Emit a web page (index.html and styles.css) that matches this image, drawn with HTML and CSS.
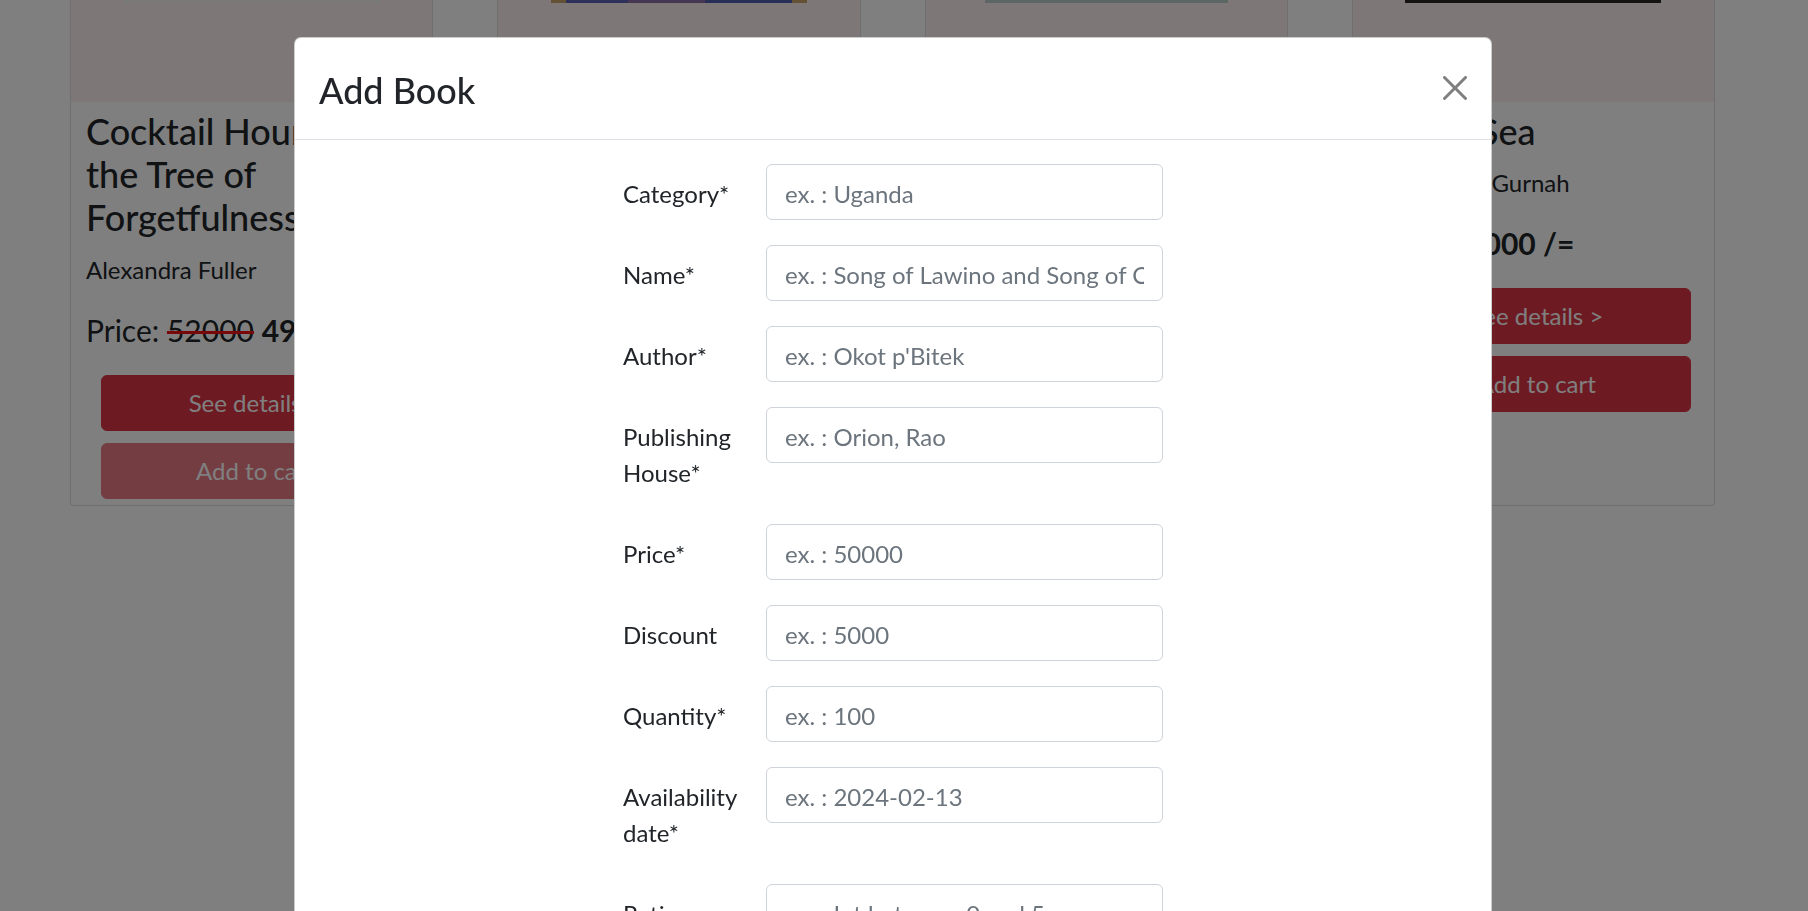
FILE: index.html
```html
<!DOCTYPE html>
<html lang="en">
<head>
<meta charset="utf-8">
<title>Books – Add Book</title>
<link rel="stylesheet" href="styles.css">
</head>
<body>
<main class="shelf">
  <article class="card">
    <div class="card-media"><span class="thumb thumb-1"></span></div>
    <div class="card-body">
      <h4 class="card-title">Cocktail Hour under the Tree of Forgetfulness</h4>
      <p class="card-author">Alexandra Fuller</p>
      <p class="card-price">Price: <s class="old">52000</s> <b>49400 /=</b></p>
      <div class="card-actions">
        <button class="btn" type="button">See details &gt;</button>
        <button class="btn" type="button" disabled>Add to cart</button>
      </div>
    </div>
  </article>
  <article class="card">
    <div class="card-media"><span class="thumb thumb-2"></span></div>
    <div class="card-body card-body-covered">
      <div class="card-actions">
        <button class="btn" type="button">See details &gt;</button>
        <button class="btn" type="button">Add to cart</button>
      </div>
    </div>
  </article>
  <article class="card">
    <div class="card-media"><span class="thumb thumb-3"></span></div>
    <div class="card-body card-body-covered">
      <div class="card-actions">
        <button class="btn" type="button">See details &gt;</button>
        <button class="btn" type="button">Add to cart</button>
      </div>
    </div>
  </article>
  <article class="card">
    <div class="card-media"><span class="thumb thumb-4"></span></div>
    <div class="card-body">
      <h4 class="card-title">By the Sea</h4>
      <p class="card-author">Abdulrazak Gurnah</p>
      <p class="card-price">Price: <b>45000 /=</b></p>
      <div class="card-actions">
        <button class="btn" type="button">See details &gt;</button>
        <button class="btn" type="button">Add to cart</button>
      </div>
    </div>
  </article>
</main>

<div class="backdrop"></div>

<div class="modal" role="dialog" aria-labelledby="addBookTitle">
  <div class="modal-dialog">
    <div class="modal-header">
      <h4 class="modal-title" id="addBookTitle">Add Book</h4>
      <button class="btn-close" type="button" aria-label="Close">
        <svg viewBox="0 0 16 16" width="24" height="24" aria-hidden="true"><path fill="#000" fill-opacity=".5" d="M.293.293a1 1 0 0 1 1.414 0L8 6.586 14.293.293a1 1 0 1 1 1.414 1.414L9.414 8l6.293 6.293a1 1 0 0 1-1.414 1.414L8 9.414l-6.293 6.293a1 1 0 0 1-1.414-1.414L6.586 8 .293 1.707a1 1 0 0 1 0-1.414z"/></svg>
      </button>
    </div>
    <div class="modal-body">
      <form class="book-form">
        <div class="form-row"><label class="form-label" for="f-category">Category*</label><input class="form-control" id="f-category" placeholder="ex. : Uganda"></div>
        <div class="form-row"><label class="form-label" for="f-name">Name*</label><input class="form-control" id="f-name" placeholder="ex. : Song of Lawino and Song of Ocol"></div>
        <div class="form-row"><label class="form-label" for="f-author">Author*</label><input class="form-control" id="f-author" placeholder="ex. : Okot p'Bitek"></div>
        <div class="form-row"><label class="form-label" for="f-house">Publishing House*</label><input class="form-control" id="f-house" placeholder="ex. : Orion, Rao"></div>
        <div class="form-row"><label class="form-label" for="f-price">Price*</label><input class="form-control" id="f-price" placeholder="ex. : 50000"></div>
        <div class="form-row"><label class="form-label" for="f-discount">Discount</label><input class="form-control" id="f-discount" placeholder="ex. : 5000"></div>
        <div class="form-row"><label class="form-label" for="f-qty">Quantity*</label><input class="form-control" id="f-qty" placeholder="ex. : 100"></div>
        <div class="form-row"><label class="form-label" for="f-date">Availability date*</label><input class="form-control" id="f-date" placeholder="ex. : 2024-02-13"></div>
        <div class="form-row"><label class="form-label" for="f-rating">Rating</label><input class="form-control" id="f-rating" placeholder="ex. : Int between 0 and 5"></div>
      </form>
    </div>
  </div>
</div>
</body>
</html>
```

FILE: styles.css
```css
* {
  box-sizing: border-box;
}

html,
body {
  margin: 0;
  height: 100%;
}

body {
  font-family: Lato, "Open Sans", "DejaVu Sans", sans-serif;
  font-size: 24px;
  line-height: 1.5;
  color: #212529;
  background: #fff;
  overflow: hidden;
}

/* ---------- page behind the modal ---------- */

.shelf {
  display: grid;
  grid-template-columns: repeat(4, 1fr);
  column-gap: 64px;
  width: 1645px;
  margin: -1px 0 0 70px;
  align-items: stretch;
}

.card {
  display: flex;
  flex-direction: column;
  background: #fff;
  border: 1px solid rgba(0, 0, 0, 0.125);
  border-radius: 0 0 4px 4px;
}

.card-media {
  height: 102px;
  background: #faeeee;
  display: flex;
  justify-content: center;
  align-items: flex-start;
}

.thumb {
  display: block;
  width: 256px;
  height: 3px;
}

.thumb-1 { background: #f2f4ef; }
.thumb-2 { background: linear-gradient(90deg, #c9a266 0 6%, #5b63b5 6% 30%, #8a6fa8 30% 60%, #4f5fae 60% 94%, #c9a266 94%); }
.thumb-3 { width: 243px; background: #b7cccb; }
.thumb-4 { background: #2b2527; }

.card-body {
  padding: 8px 15px 6px;
}

.card-body-covered {
  padding-top: 186px;
}

.card-title {
  margin: 0 0 12px;
  font-size: 36px;
  line-height: 1.2;
  font-weight: 500;
}

.card-author {
  margin: 0 0 24px;
  font-size: 24px;
  line-height: 36px;
}

.card-price {
  margin: 0 0 27px;
  font-size: 30px;
  line-height: 36px;
}

.card-price b {
  font-weight: 700;
}

.old {
  text-decoration-color: #f01010;
  text-decoration-thickness: 3px;
}

.card-actions {
  display: flex;
  flex-direction: column;
  gap: 12px;
  margin: 0 8px 0 15px;
}

.btn {
  height: 56px;
  font: inherit;
  font-size: 24px;
  color: #fff;
  background: #dc3545;
  border: 1px solid #dc3545;
  border-radius: 6px;
}

.btn:disabled {
  opacity: 0.65;
}

/* ---------- modal ---------- */

.backdrop {
  position: fixed;
  inset: 0;
  background: rgba(0, 0, 0, 0.5);
}

.modal {
  position: fixed;
  inset: 0;
  overflow: hidden;
  padding-right: 22px;
}

.modal-dialog {
  width: 1198px;
  margin: 37px auto 0;
  background: #fff;
  border: 1px solid rgba(0, 0, 0, 0.2);
  border-radius: 7px;
}

.modal-header {
  display: flex;
  justify-content: space-between;
  align-items: flex-start;
  padding: 25px 24px 22px;
  border-bottom: 1px solid #dee2e6;
}

.modal-title {
  margin: 0;
  font-size: 36px;
  line-height: 54px;
  font-weight: 500;
}

.btn-close {
  display: block;
  margin-top: 13px;
  padding: 0;
  border: 0;
  background: none;
  line-height: 0;
}

.modal-body {
  padding: 24px;
}

.book-form {
  width: 540px;
  margin: 0 auto;
}

.form-row {
  display: grid;
  grid-template-columns: 119px 397px;
  column-gap: 24px;
  align-items: start;
  margin-bottom: 25px;
}

.form-label {
  padding: 12px 0 8px;
  font-size: 24px;
  line-height: 36px;
}

.form-control {
  width: 100%;
  height: 56px;
  padding: 10px 18px 8px;
  font: inherit;
  font-size: 24px;
  line-height: 36px;
  color: #212529;
  background: #fff;
  border: 1px solid #ced4da;
  border-radius: 6px;
}

.form-control::placeholder {
  color: #6c757d;
  opacity: 1;
}
```
